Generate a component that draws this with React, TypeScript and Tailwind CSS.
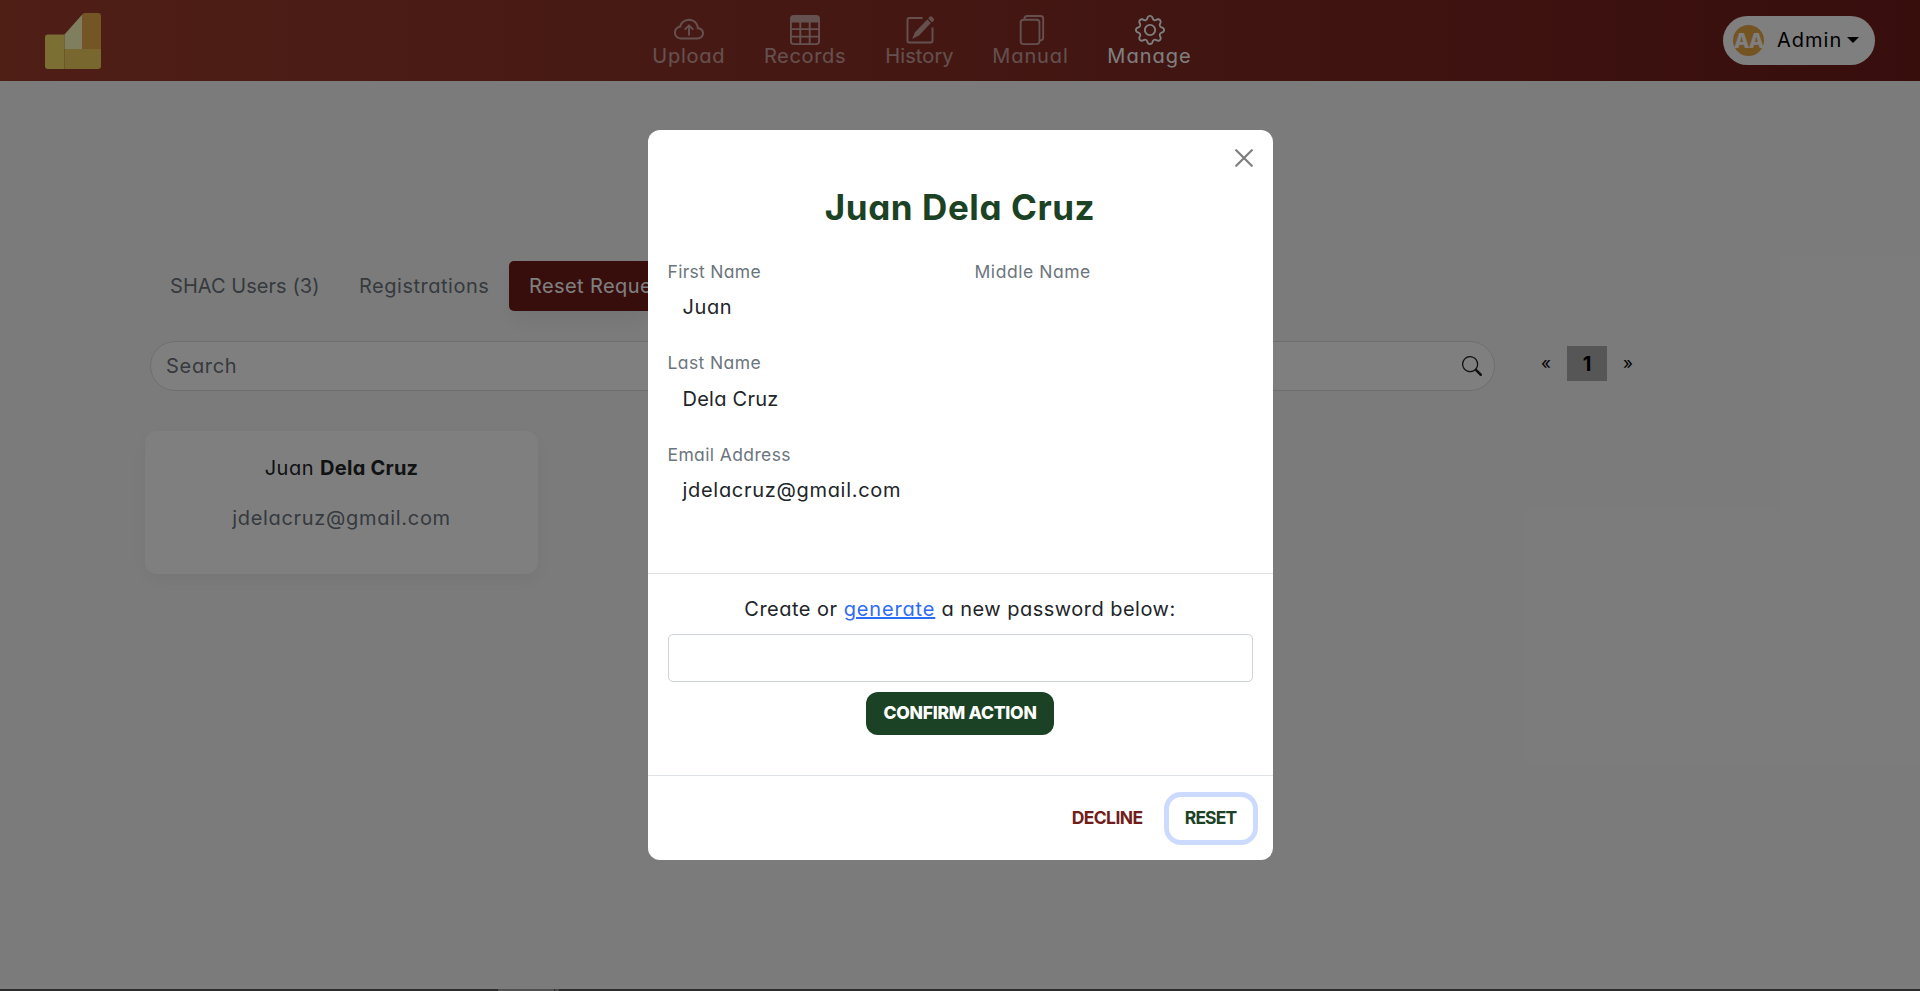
import React from "react";
import { BsCloudArrowUp, BsTable, BsFiles, BsGear, BsSearch } from "react-icons/bs";

function EditIcon() {
  return (
    <svg width="30" height="30" viewBox="0 0 30 30" fill="none">
      <path d="M17.5 3H4.2Q2.5 3 2.5 4.7V25.8Q2.5 27.5 4.2 27.5H25.8Q27.5 27.5 27.5 25.8V12.5" stroke="currentColor" strokeWidth="1.9" />
      <path d="M22.3 4.6 25.8 8.1 14 20.6 7.2 24.1 10 17.2Z" fill="currentColor" />
      <path d="M23.2 3.4 25 1.5Q25.8.9 26.6 1.6L28.8 3.8Q29.4 4.6 28.8 5.4L27 7.2Z" fill="currentColor" />
    </svg>
  );
}

function Logo() {
  return (
    <svg width="56" height="56" viewBox="0 0 56 56">
      <path d="M19.5 21.5H3Q0 21.5 0 24.5V53Q0 56 3 56H19.5Z" fill="#f8de66" />
      <path d="M19.5 36H56V53Q56 56 53 56H19.5Z" fill="#f2ce60" />
      <path d="M37 1.5Q38 0 40 0H53Q56 0 56 3V36H37Z" fill="#e8aa48" />
      <path d="M19.5 21.5 37 1.8V36H19.5Z" fill="#fefec0" />
    </svg>
  );
}

const navItems = [
  { label: "Upload", icon: <BsCloudArrowUp size={30} />, box: "w-[111.5px] tracking-[0.75px] text-white/55" },
  { label: "Records", icon: <BsTable size={30} />, box: "w-[121px] tracking-[0.65px] text-white/55" },
  { label: "History", icon: <EditIcon />, box: "w-[108px] tracking-[0.1px] text-white/55" },
  { label: "Manual", icon: <BsFiles size={30} />, box: "w-[114px] tracking-[0.9px] text-white/55" },
  { label: "Manage", icon: <BsGear size={30} />, box: "w-[124px] tracking-[1px] text-white" },
];

function Header() {
  return (
    <header className="flex h-[81px] items-start bg-linear-to-r from-[#9e3e2d] via-[#882e26] to-[#701d1b] px-[45px]">
      <div className="mt-[13px]">
        <Logo />
      </div>
      <nav className="ml-[532px] flex pt-[15px]">
        {navItems.map((item) => (
          <a key={item.label} className={`flex flex-col items-center leading-[22px] ${item.box}`}>
            {item.icon}
            <span>{item.label}</span>
          </a>
        ))}
      </nav>
      <button className="mt-4 ml-auto flex h-[49px] w-[152px] items-center rounded-full bg-white pl-[10px] text-black">
        <span className="flex size-[31px] items-center justify-center rounded-full bg-[#eba848] font-extrabold tracking-[-1px] text-white">
          AA
        </span>
        <span className="-mt-px ml-[13px] leading-[30px] tracking-[1px]">Admin</span>
        <svg className="-mt-[2px] ml-[5px]" width="12" height="6" viewBox="0 0 12 6">
          <path d="M0 0H12L6 6Z" fill="currentColor" />
        </svg>
      </button>
    </header>
  );
}

function Users() {
  return (
    <main className="flex flex-1 flex-col pt-[180px] pl-[145px]">
      <div className="ml-[5px] flex h-[50px] items-center text-[#6c757d]">
        <div className="w-[190px] pl-5 tracking-[0.05px]">SHAC Users (3)</div>
        <div className="w-[169px] pl-[19px] tracking-[0.52px]">Registrations</div>
        <div className="flex h-[50px] w-[139px] items-center overflow-hidden rounded-l-[5px] bg-[#701d1b] pl-5 tracking-[0.4px] whitespace-nowrap text-white shadow-[0_10px_20px_rgba(0,0,0,0.06)]">
          Reset Reque
        </div>
      </div>
      <div className="mt-[30px] ml-[5px] flex items-center">
        <div className="flex h-[50px] w-[1345px] items-center justify-between rounded-full border border-[#dcdde0] bg-white pr-[12px] pl-[15px] text-[#6c757d]">
          <span className="tracking-[0.7px]">Search</span>
          <BsSearch size={20} className="text-[#212529]" />
        </div>
        <div className="-mt-[5px] ml-[45px] flex h-[35px] items-center text-black">
          <span className="w-[27px] pt-px pl-px text-[17px]">«</span>
          <span className="flex h-[35px] w-10 items-center justify-center bg-[#adadad] font-bold">1</span>
          <span className="ml-[16px] pt-px text-[17px]">»</span>
        </div>
      </div>
      <div className="mt-10 h-[143px] w-[393px] rounded-[12px] bg-white pt-[22px] text-center leading-[30px] shadow-[0_6px_20px_rgba(0,0,0,0.05)]">
        <div className="tracking-[0.5px] text-[#212529]">
          Juan <b className="font-bold tracking-[0.25px]">Dela Cruz</b>
        </div>
        <div className="mt-5 tracking-[0.7px] text-[#6c757d]">jdelacruz@gmail.com</div>
      </div>
    </main>
  );
}

const fields = [
  { label: "First Name", value: "Juan", l: "tracking-[0.3px]", v: "tracking-[0.6px]" },
  { label: "Middle Name", value: "", l: "tracking-[0.55px]", v: "" },
  { label: "Last Name", value: "Dela Cruz", l: "tracking-[0.4px]", v: "tracking-[0.25px]" },
  { label: "Email Address", value: "jdelacruz@gmail.com", l: "tracking-[0.38px]", v: "tracking-[0.7px]" },
];

function ResetDialog() {
  return (
    <section className="h-[730px] w-[625px] rounded-[12px] bg-white">
      <div className="flex h-14 justify-end pt-[19px] pr-5">
        <svg width="18" height="18" viewBox="0 0 18 18" stroke="#7f7f7f" strokeWidth="2.2" strokeLinecap="round">
          <path d="M1.2 1.2 16.8 16.8M16.8 1.2 1.2 16.8" />
        </svg>
      </div>
      <h1 className="text-center text-[35px] leading-[42px] font-bold tracking-[0.58px] text-[#1b4224]">Juan Dela Cruz</h1>
      <div className="grid h-[345px] grid-cols-[307px_1fr] content-start pt-[31px] pl-5">
        {fields.map((f) => (
          <div key={f.label} className={`h-[91.3px] ${f.label === "Last Name" ? "col-span-2" : ""}`}>
            <div className={`text-[17.5px] leading-[26px] text-[#6c757d] ${f.l}`}>{f.label}</div>
            <div className={`mt-[7.3px] pl-[15px] leading-[30px] ${f.v}`}>{f.value}</div>
          </div>
        ))}
      </div>
      <div className="flex h-[202px] flex-col items-center border-t border-[#dee2e6] px-5 pt-5">
        <div className="leading-[30px] tracking-[0.48px]">
          Create or <a className="tracking-[0.85px] text-[#2f6cf6] underline">generate</a> a new password below:
        </div>
        <div className="mt-[10px] h-12 w-full shrink-0 rounded-[5px] border border-[#ced4da]" />
        <button className="mt-[10px] h-[43px] w-[188px] shrink-0 rounded-[12px] bg-[#1b4224] pb-px text-[17.5px] font-extrabold tracking-[-0.25px] text-white">
          CONFIRM ACTION
        </button>
      </div>
      <div className="flex h-[85px] justify-end border-t border-[#dee2e6] pt-[21px] pr-5 text-[17.5px] font-bold">
        <button className="h-[43px] px-4 pb-px tracking-[-0.6px] text-[#701d1b]">DECLINE</button>
        <button className="ml-[10px] h-[43px] w-[84px] rounded-[12px] pb-px tracking-[-0.9px] text-[#1b4224] ring-[5px] ring-[#cbdafe]">
          RESET
        </button>
      </div>
    </section>
  );
}

export default function App() {
  return (
    <div className="flex h-[991px] flex-col overflow-hidden font-['Inter',sans-serif] text-[20px] text-[#212529] [font-feature-settings:'cv11']">
      <div className="relative flex h-[989px] flex-col bg-[#f7f7f7]">
        <Header />
        <Users />
        <div className="absolute inset-0 flex items-start justify-center bg-black/50 pt-[130px]">
          <ResetDialog />
        </div>
      </div>
      <div className="flex h-[2px] bg-[#2c2c2c] pl-[498px]">
        <div className="w-[56px] bg-[#505050]" />
        <div className="ml-px w-1 bg-[#484848]" />
      </div>
    </div>
  );
}
